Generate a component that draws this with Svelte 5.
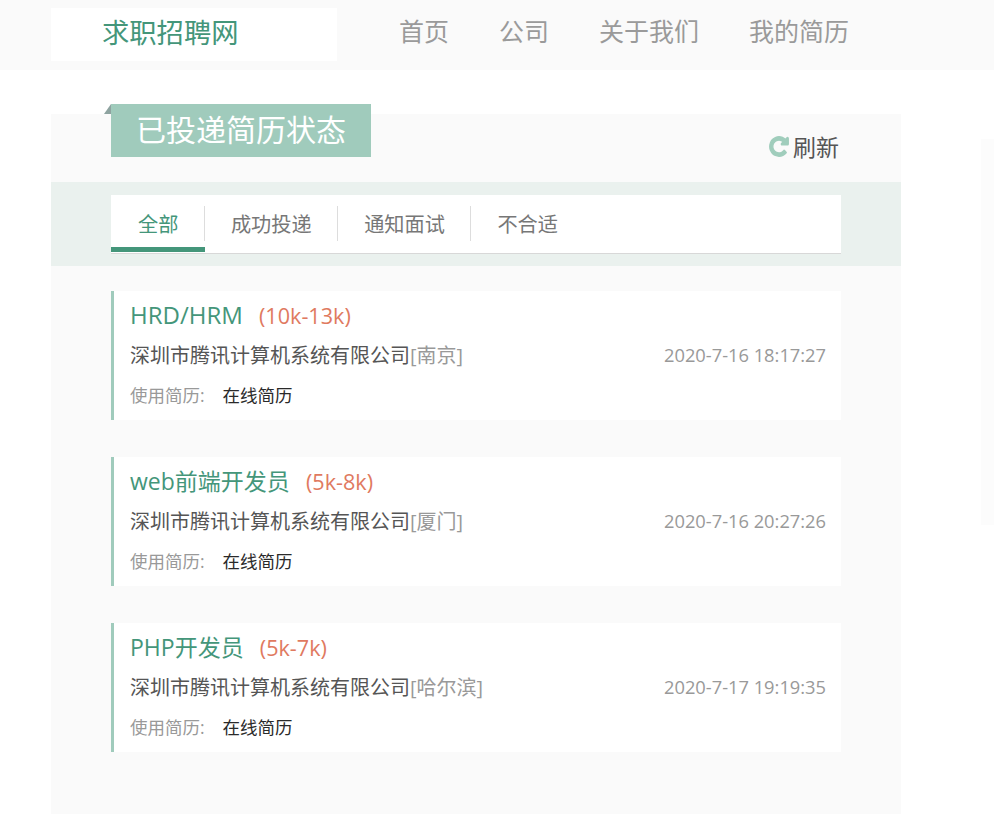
<script>
  const navs = ['首页', '公司', '关于我们', '我的简历'];
  const tabs = ['全部', '成功投递', '通知面试', '不合适'];
  const jobs = [
    { title: 'HRD/HRM', caps: true, salary: '10k-13k', city: '南京', time: '2020-7-16 18:17:27' },
    { title: 'web前端开发员', salary: '5k-8k', city: '厦门', time: '2020-7-16 20:27:26' },
    { title: 'PHP开发员', salary: '5k-7k', city: '哈尔滨', time: '2020-7-17 19:19:35' }
  ];
</script>

<div class="page">
  <header>
    <div class="logo">求职招聘网</div>
    <nav>
      {#each navs as n}
        <span>{n}</span>
      {/each}
    </nav>
  </header>

  <main>
    <div class="head">
      <div class="ribbon"><h2>已投递简历状态</h2></div>
      <div class="refresh">
        <svg width="20" height="21" viewBox="68 68 1656 1656" preserveAspectRatio="none">
          <path fill="#a0cdbc" stroke="#a0cdbc" stroke-width="110" stroke-linejoin="round" d="M1664 256v448q0 26-19 45t-45 19h-448q-42 0-59-40-17-39 14-69l138-138q-148-137-349-137-104 0-198.5 40.5t-163.5 109.5-109.5 163.5-40.5 198.5 40.5 198.5 109.5 163.5 163.5 109.5 198.5 40.5q119 0 225-52t179-147q7-10 23-12 15 0 25 9l137 138q9 8 9.5 20.5t-7.5 22.5q-109 132-264 204.5t-327 72.5q-156 0-298-61t-245-164-164-245-61-298 61-298 164-245 245-164 298-61q147 0 284.5 55.5t244.5 156.5l130-129q29-31 70-14 39 17 39 59z" />
        </svg>
        <span>刷新</span>
      </div>
    </div>

    <div class="tabband">
      <ul class="tabs">
        {#each tabs as t, i}
          <li class:active={i === 0}>{t}</li>
        {/each}
      </ul>
    </div>

    <div class="list">
      {#each jobs as job}
        <div class="card">
          <div class="title">
            <span class="name" class:caps={job.caps}>{job.title}</span>
            <span class="salary">({job.salary})</span>
          </div>
          <div class="row">
            <span class="company">深圳市腾讯计算机系统有限公司<em>[{job.city}]</em></span>
            <span class="time">{job.time}</span>
          </div>
          <div class="resume"><span class="label">使用简历:</span><span class="val">在线简历</span></div>
        </div>
      {/each}
    </div>
  </main>

  <div class="side"></div>
</div>

<style>
  :global(body) {
    margin: 0;
    background: #fff;
  }
  .page {
    font-family: "Open Sans", "Noto Sans CJK SC", sans-serif;
    width: 994px;
    height: 833px;
    overflow: hidden;
    position: relative;
  }
  header {
    height: 70px;
    background: #fafafa;
    padding: 8px 0 0 51px;
    box-sizing: border-box;
    display: flex;
  }
  .logo {
    width: 286px;
    height: 53px;
    background: #fff;
    box-sizing: border-box;
    padding-left: 51px;
    font-size: 27.3px;
    line-height: 50px;
    color: #44967a;
  }
  nav {
    display: flex;
    gap: 50px;
    margin-left: 62px;
    font-size: 25px;
    line-height: 47px;
    color: #9a9a9a;
  }
  main {
    width: 850px;
    height: 700px;
    margin: 44px 0 0 51px;
    background: #fafafa;
  }
  .head {
    height: 68px;
    position: relative;
    display: flex;
    justify-content: flex-end;
  }
  .ribbon {
    position: absolute;
    left: 60px;
    top: -10px;
    width: 260px;
    height: 53px;
    background: #a0cbbc;
    box-sizing: border-box;
    padding-left: 25px;
  }
  .ribbon::before {
    content: '';
    position: absolute;
    left: -7px;
    top: 0;
    border-style: solid;
    border-width: 0 0 10px 7px;
    border-color: transparent transparent #8ea3a0 transparent;
  }
  h2 {
    margin: 0;
    font-weight: 400;
    font-size: 30px;
    line-height: 52px;
    color: #fff;
  }
  .refresh {
    display: flex;
    align-items: center;
    gap: 4px;
    height: 30px;
    margin: 17px 62px 0 0;
    font-size: 23px;
    color: #555;
  }
  .refresh svg {
    margin-top: 1px;
  }
  .tabband {
    height: 84px;
    background: #eaf1ee;
    padding: 13px 60px 0;
    box-sizing: border-box;
  }
  .tabs {
    list-style: none;
    margin: 0;
    padding: 0;
    display: flex;
    background: #fff;
    height: 59px;
    width: 730px;
    border-bottom: 1px solid #d8d8d8;
    box-sizing: border-box;
  }
  .tabs li {
    position: relative;
    box-sizing: border-box;
    height: 57px;
    padding: 0 26.5px 0 26px;
    font-size: 20.2px;
    line-height: 59px;
    color: #777;
  }
  .tabs li:not(:last-child)::after {
    content: '';
    position: absolute;
    right: 0;
    top: 11px;
    height: 35px;
    width: 1px;
    background: #ddd;
  }
  .tabs li.active {
    padding-left: 27px;
    color: #44967a;
    border-bottom: 5px solid #44967a;
  }
  .list {
    padding: 25px 60px 0;
    display: flex;
    flex-direction: column;
    gap: 37px;
  }
  .card {
    width: 730px;
    height: 129px;
    background: #fff;
    border-left: 3px solid #a0cbbc;
    box-sizing: border-box;
    padding: 6px 15px 0 16px;
  }
  .title {
    height: 36px;
    line-height: 36px;
  }
  .name {
    font-size: 23px;
    color: #44967a;
  }
  .name.caps {
    font-size: 24px;
  }
  .salary {
    font-size: 21.6px;
    color: #e07a5f;
    margin-left: 12px;
  }
  .row {
    display: flex;
    justify-content: space-between;
    align-items: center;
    font-size: 20px;
    line-height: 40px;
    margin-top: 3px;
    color: #555;
  }
  em {
    font-style: normal;
    color: #999;
  }
  .time {
    color: #999;
    font-size: 18.3px;
    margin-top: -2px;
  }
  .resume {
    font-size: 17.5px;
    line-height: 38px;
  }
  .label {
    color: #999;
    margin-right: 18px;
  }
  .val {
    color: #2a2a2a;
  }
  .side {
    position: absolute;
    left: 981px;
    top: 139px;
    width: 13px;
    height: 386px;
    background: #fcfcfc;
  }
</style>
